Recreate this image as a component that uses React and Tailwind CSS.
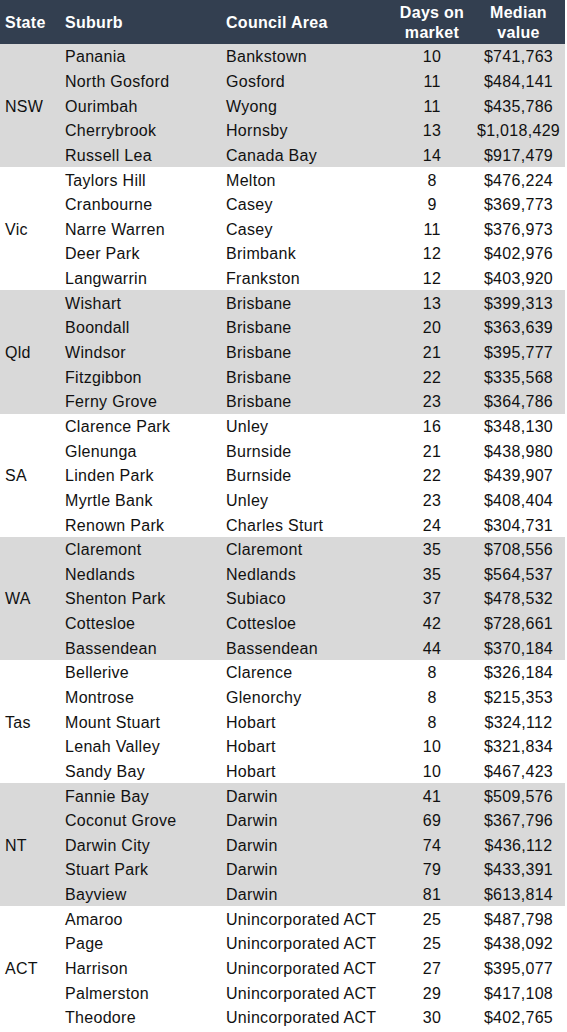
import React from "react";

const groups = [
  { state: "NSW", grey: true, rows: [
    ["Panania", "Bankstown", "10", "$741,763"],
    ["North Gosford", "Gosford", "11", "$484,141"],
    ["Ourimbah", "Wyong", "11", "$435,786"],
    ["Cherrybrook", "Hornsby", "13", "$1,018,429"],
    ["Russell Lea", "Canada Bay", "14", "$917,479"],
  ]},
  { state: "Vic", grey: false, rows: [
    ["Taylors Hill", "Melton", "8", "$476,224"],
    ["Cranbourne", "Casey", "9", "$369,773"],
    ["Narre Warren", "Casey", "11", "$376,973"],
    ["Deer Park", "Brimbank", "12", "$402,976"],
    ["Langwarrin", "Frankston", "12", "$403,920"],
  ]},
  { state: "Qld", grey: true, rows: [
    ["Wishart", "Brisbane", "13", "$399,313"],
    ["Boondall", "Brisbane", "20", "$363,639"],
    ["Windsor", "Brisbane", "21", "$395,777"],
    ["Fitzgibbon", "Brisbane", "22", "$335,568"],
    ["Ferny Grove", "Brisbane", "23", "$364,786"],
  ]},
  { state: "SA", grey: false, rows: [
    ["Clarence Park", "Unley", "16", "$348,130"],
    ["Glenunga", "Burnside", "21", "$438,980"],
    ["Linden Park", "Burnside", "22", "$439,907"],
    ["Myrtle Bank", "Unley", "23", "$408,404"],
    ["Renown Park", "Charles Sturt", "24", "$304,731"],
  ]},
  { state: "WA", grey: true, rows: [
    ["Claremont", "Claremont", "35", "$708,556"],
    ["Nedlands", "Nedlands", "35", "$564,537"],
    ["Shenton Park", "Subiaco", "37", "$478,532"],
    ["Cottesloe", "Cottesloe", "42", "$728,661"],
    ["Bassendean", "Bassendean", "44", "$370,184"],
  ]},
  { state: "Tas", grey: false, rows: [
    ["Bellerive", "Clarence", "8", "$326,184"],
    ["Montrose", "Glenorchy", "8", "$215,353"],
    ["Mount Stuart", "Hobart", "8", "$324,112"],
    ["Lenah Valley", "Hobart", "10", "$321,834"],
    ["Sandy Bay", "Hobart", "10", "$467,423"],
  ]},
  { state: "NT", grey: true, rows: [
    ["Fannie Bay", "Darwin", "41", "$509,576"],
    ["Coconut Grove", "Darwin", "69", "$367,796"],
    ["Darwin City", "Darwin", "74", "$436,112"],
    ["Stuart Park", "Darwin", "79", "$433,391"],
    ["Bayview", "Darwin", "81", "$613,814"],
  ]},
  { state: "ACT", grey: false, rows: [
    ["Amaroo", "Unincorporated ACT", "25", "$487,798"],
    ["Page", "Unincorporated ACT", "25", "$438,092"],
    ["Harrison", "Unincorporated ACT", "27", "$395,077"],
    ["Palmerston", "Unincorporated ACT", "29", "$417,108"],
    ["Theodore", "Unincorporated ACT", "30", "$402,765"],
  ]},
];

const cols = "grid grid-cols-[60px_161px_171px_80px_93px]";

export default function App() {
  return (
    <div className="w-[565px] bg-white font-['Liberation_Sans',Arial,sans-serif] text-[16px] tracking-[0.3px] text-[#111]">
      <div className={`${cols} h-[44px] items-center bg-[#333f50] pt-[1px] font-bold leading-[20px] text-white`}>
        <div className="pl-[5px]">State</div>
        <div className="pl-[5px]">Suburb</div>
        <div className="pl-[5px]">Council Area</div>
        <div className="text-center">Days on<br />market</div>
        <div className="text-center">Median<br />value</div>
      </div>
      {groups.map((g) => (
        <div
          key={g.state}
          className={`${cols} grid-rows-[repeat(5,24.65px)] ${g.grey ? "bg-[#d9d9d9]" : "bg-white"}`}
        >
          <div className="col-start-1 row-span-5 row-start-1 flex items-center pl-[5px] pt-[2px]">{g.state}</div>
          {g.rows.map((r, i) => (
            <React.Fragment key={r[0]}>
              <div className="col-start-2 flex items-center whitespace-nowrap pl-[5px] pt-[2px]" style={{ gridRowStart: i + 1 }}>{r[0]}</div>
              <div className="col-start-3 flex items-center whitespace-nowrap pl-[5px] pt-[2px]" style={{ gridRowStart: i + 1 }}>{r[1]}</div>
              <div className="col-start-4 flex items-center justify-center pt-[2px]" style={{ gridRowStart: i + 1 }}>{r[2]}</div>
              <div className="col-start-5 flex items-center justify-center pt-[2px]" style={{ gridRowStart: i + 1 }}>{r[3]}</div>
            </React.Fragment>
          ))}
        </div>
      ))}
    </div>
  );
}
